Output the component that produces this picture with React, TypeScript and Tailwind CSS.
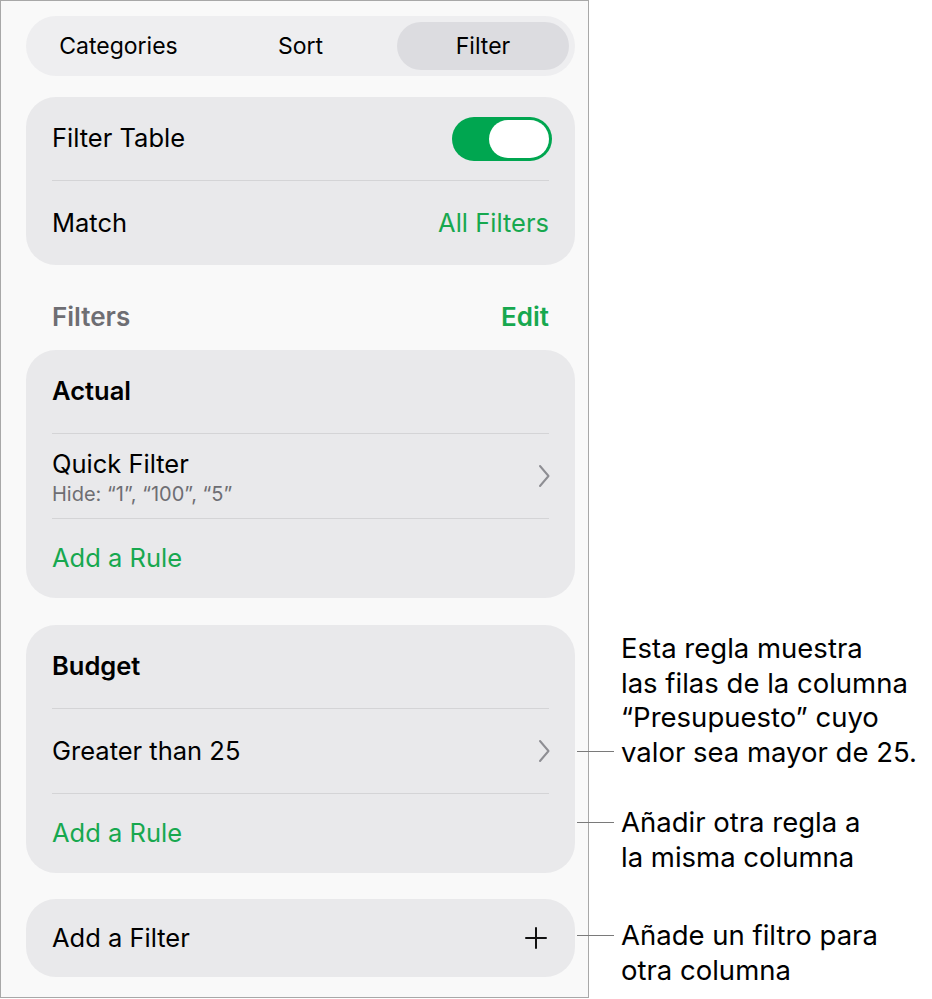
import React from "react";

const font = { fontFamily: "Inter, 'Noto Sans', sans-serif" };

function Chevron() {
  return (
    <svg width="14" height="26" viewBox="0 0 14 26" fill="none" className="-mr-[2px] shrink-0">
      <path d="M3 3l8.5 10L3 23" stroke="#8e8e93" strokeWidth="2" strokeLinecap="round" strokeLinejoin="round" />
    </svg>
  );
}

function Plus() {
  return (
    <svg width="22" height="22" viewBox="0 0 22 22" fill="none" className="mr-[2px] shrink-0">
      <path d="M11 1v20M1 11h20" stroke="#111" strokeWidth="2" strokeLinecap="round" />
    </svg>
  );
}

function Divider() {
  return <div className="mx-[26px] h-px bg-[#d4d4d6]" />;
}

function Toggle() {
  return (
    <div className="-mr-[3px] flex h-[44px] w-[100px] items-center justify-end rounded-full bg-[#00a650] p-[3px]">
      <div className="h-[38px] w-[60px] rounded-full bg-white" />
    </div>
  );
}

function Row({ children, h = "h-[83px]" }: { children: React.ReactNode; h?: string }) {
  return <div className={`flex ${h} items-center justify-between px-[26px]`}>{children}</div>;
}

function Callout({ lines, at, mt }: { lines: string[]; at: "first" | "last"; mt: string }) {
  return (
    <div className={`relative z-10 flex ${mt} ${at === "last" ? "items-end" : "items-start"}`}>
      <div className={`h-px w-[37px] shrink-0 bg-[#7a7a7a] ${at === "last" ? "mb-[17px]" : "mt-[17px]"}`} />
      <div className="pl-[7px] text-[27.5px] leading-[34.5px] text-black">
        {lines.map((l) => (
          <div key={l} className="whitespace-nowrap">{l}</div>
        ))}
      </div>
    </div>
  );
}

const card = "ml-[25px] mr-[13px] rounded-[30px] bg-[#e9e9eb] text-[25.5px] text-black";

export default function App() {
  return (
    <div className="flex min-h-[999px] w-[932px] bg-white" style={font}>
      {/* panel */}
      <div className="h-[998px] w-[589px] shrink-0 border border-[#a8a8a8] bg-[#f9f9f9]">
        {/* segmented control */}
        <div className="ml-[25px] mr-[13px] mt-[15px] grid h-[60px] grid-cols-3 rounded-full bg-[#eeeef0] p-[6px] text-[23px] text-black">
          <div className="flex items-center justify-center pr-[6px]">Categories</div>
          <div className="flex items-center justify-center">Sort</div>
          <div className="ml-[7px] flex items-center justify-center rounded-full bg-[#dcdce0]">Filter</div>
        </div>

        {/* filter table card */}
        <div className={`${card} mt-[21px]`}>
          <Row>
            <span>Filter Table</span>
            <Toggle />
          </Row>
          <Divider />
          <Row h="h-[84px]">
            <span>Match</span>
            <span className="text-[#17a84f]">All Filters</span>
          </Row>
        </div>

        {/* filters header */}
        <div className="flex h-[85px] items-center justify-between pl-[51px] pr-[39px] pt-[18px] text-[26px] font-semibold">
          <span className="text-[#6e6e73]">Filters</span>
          <span className="text-[#17a84f]">Edit</span>
        </div>

        {/* actual card */}
        <div className={card}>
          <Row>
            <span className="font-semibold">Actual</span>
          </Row>
          <Divider />
          <Row h="h-[84px]">
            <div className="flex flex-col pt-[4px]">
              <span className="leading-[32px]">Quick Filter</span>
              <span className="text-[20px] leading-[28px] text-[#6e6e73]">Hide: “1”, “100”, “5”</span>
            </div>
            <Chevron />
          </Row>
          <Divider />
          <Row h="h-[79px]">
            <span className="text-[#17a84f]">Add a Rule</span>
          </Row>
        </div>

        {/* budget card */}
        <div className={`${card} mt-[27px]`}>
          <Row>
            <span className="font-semibold">Budget</span>
          </Row>
          <Divider />
          <Row h="h-[84px]">
            <span>Greater than 25</span>
            <Chevron />
          </Row>
          <Divider />
          <Row h="h-[79px]">
            <span className="text-[#17a84f]">Add a Rule</span>
          </Row>
        </div>

        {/* add filter card */}
        <div className={`${card} mt-[26px] flex h-[78px] items-center justify-between px-[26px]`}>
          <span>Add a Filter</span>
          <Plus />
        </div>
      </div>

      {/* callouts */}
      <div className="ml-[-12px] flex flex-col">
        <Callout
          at="last"
          mt="mt-[631px]"
          lines={["Esta regla muestra", "las filas de la columna", "“Presupuesto” cuyo", "valor sea mayor de 25."]}
        />
        <Callout at="first" mt="mt-[36px]" lines={["Añadir otra regla a", "la misma columna"]} />
        <Callout at="first" mt="mt-[44px]" lines={["Añade un filtro para", "otra columna"]} />
      </div>
    </div>
  );
}
